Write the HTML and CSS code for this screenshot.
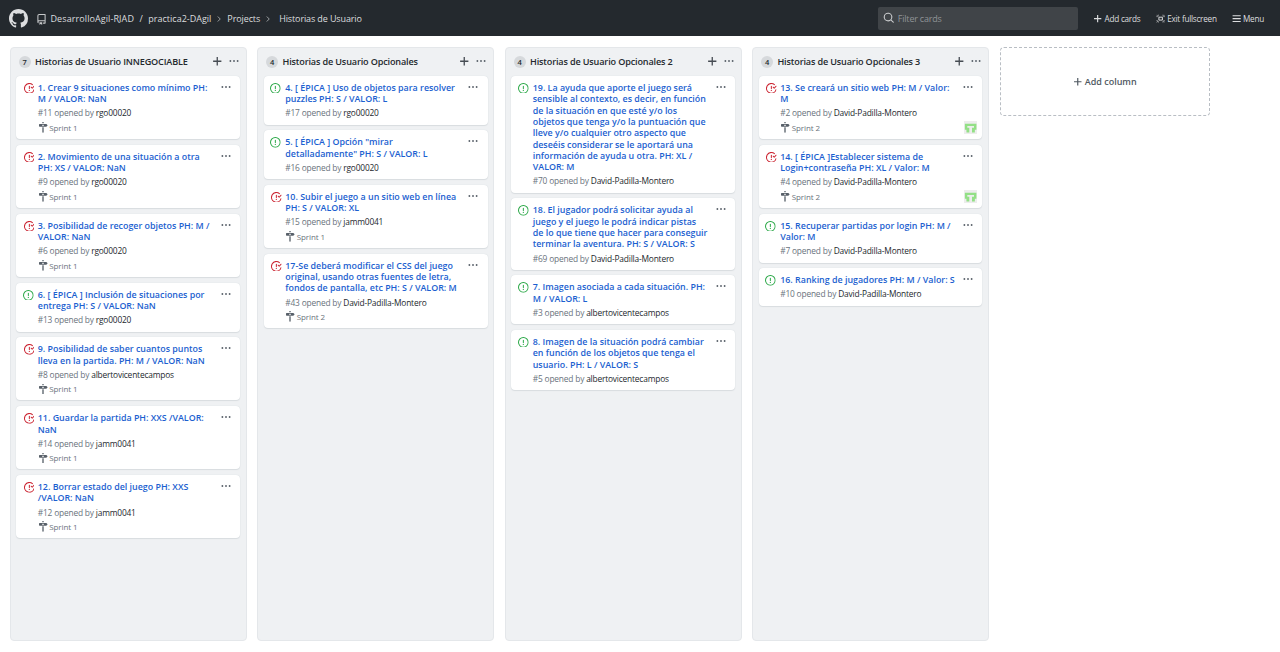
FILE: index.html
```html
<!DOCTYPE html>
<html lang="es">
<head>
<meta charset="utf-8">
<title>Historias de Usuario</title>
<link rel="stylesheet" href="styles.css">
</head>
<body>
<svg class="sprite" width="0" height="0" aria-hidden="true">
  <symbol id="mark" viewBox="0 0 16 16"><path d="M8 0C3.58 0 0 3.58 0 8c0 3.54 2.29 6.53 5.47 7.59.4.07.55-.17.55-.38 0-.19-.01-.82-.01-1.49-2.01.37-2.53-.49-2.69-.94-.09-.23-.48-.94-.82-1.13-.28-.15-.68-.52-.01-.53.63-.01 1.08.58 1.23.82.72 1.21 1.87.87 2.33.66.07-.52.28-.87.51-1.07-1.78-.2-3.64-.89-3.64-3.95 0-.87.31-1.59.82-2.15-.08-.2-.36-1.02.08-2.12 0 0 .67-.21 2.2.82.64-.18 1.32-.27 2-.27s1.36.09 2 .27c1.53-1.04 2.2-.82 2.2-.82.44 1.1.16 1.92.08 2.12.51.56.82 1.27.82 2.15 0 3.07-1.87 3.75-3.65 3.95.29.25.54.73.54 1.48 0 1.07-.01 1.93-.01 2.2 0 .21.15.46.55.38A8.01 8.01 0 0 0 16 8c0-4.42-3.58-8-8-8z"/></symbol>
  <symbol id="repo" viewBox="0 0 16 16"><path d="M2 2.500A2.500 2.500 0 0 1 4.500 0h8.750a.75.75 0 0 1 .75.75v12.500a.75.75 0 0 1-.75.75h-2.500a.75.75 0 1 1 0-1.500h1.750v-2h-8a1 1 0 0 0-.714 1.700.75.75 0 0 1-1.072 1.050A2.495 2.495 0 0 1 2 11.500v-9zm10.500-1V9h-8c-.356 0-.694.074-1 .208V2.500a1 1 0 0 1 1-1h8zM5 12.250v3.250a.25.25 0 0 0 .4.200l1.450-1.087a.25.25 0 0 1 .3 0L8.600 15.700a.25.25 0 0 0 .4-.2v-3.250a.25.25 0 0 0-.25-.25h-3.500a.25.25 0 0 0-.25.250z"/></symbol>
  <symbol id="chevron" viewBox="0 0 16 16"><path d="M5.500 3 10.500 8l-5 5" fill="none" stroke="currentColor" stroke-width="2"/></symbol>
  <symbol id="search" viewBox="0 0 16 16"><path d="M11.500 7a4.500 4.500 0 1 1-9 0 4.500 4.500 0 0 1 9 0zm-.82 4.740a6 6 0 1 1 1.060-1.060l3.040 3.040a.75.75 0 1 1-1.060 1.060l-3.040-3.040z"/></symbol>
  <symbol id="plus" viewBox="0 0 16 16"><path d="M8 1.700v12.600M1.700 8h12.600" fill="none" stroke="currentColor" stroke-width="2"/></symbol>
  <symbol id="dots" viewBox="0 0 16 16"><circle cx="2.200" cy="8" r="1.500"/><circle cx="8" cy="8" r="1.500"/><circle cx="13.800" cy="8" r="1.500"/></symbol>
  <symbol id="full" viewBox="0 0 16 16"><path d="M5 5.500h6v5H5z" fill="none" stroke="currentColor" stroke-width="1.700"/><path d="M1 1.500l2.500 2.500M15 1.500 12.500 4M1 14.500 3.500 12M15 14.500 12.500 12M.5 4.500h3M4 1v3M15.500 4.500h-3M12 1v3M.5 11.500h3M4 15v-3M15.500 11.500h-3M12 15v-3" fill="none" stroke="currentColor" stroke-width=".9"/></symbol>
  <symbol id="bars" viewBox="0 0 16 16"><path d="M1 3h14M1 8h14M1 13h14" fill="none" stroke="currentColor" stroke-width="1.900"/></symbol>
  <symbol id="open" viewBox="0 0 16 16"><path d="M8 1.500a6.500 6.500 0 1 0 0 13 6.500 6.500 0 0 0 0-13zM0 8a8 8 0 1 1 16 0A8 8 0 0 1 0 8zm9 3a1 1 0 1 1-2 0 1 1 0 0 1 2 0zm-.25-6.250a.75.75 0 0 0-1.500 0v3.500a.75.75 0 0 0 1.500 0v-3.500z"/></symbol>
  <symbol id="closed" viewBox="0 0 16 16"><path d="M1.500 8a6.500 6.500 0 0 1 10.650-5.003.75.75 0 0 0 .959-1.153 8 8 0 1 0 2.592 8.330.75.75 0 1 0-1.444-.407A6.500 6.500 0 0 1 1.500 8zM8 12a1 1 0 1 0 0-2 1 1 0 0 0 0 2zm0-8a.75.75 0 0 1 .75.75v3.500a.75.75 0 1 1-1.500 0v-3.500A.75.75 0 0 1 8 4zm4.780 4.280 3-3a.75.75 0 0 0-1.060-1.060l-2.470 2.470-.97-.97a.749.749 0 1 0-1.060 1.060l1.500 1.500a.75.75 0 0 0 1.060 0z"/></symbol>
  <symbol id="sign" viewBox="0 0 14 16"><path d="M8 2H6V0h2v2zm4 5H2c-.55 0-1-.45-1-1V4c0-.55.45-1 1-1h10l2 2-2 2zM8 4H6v2h2V4zM6 16h2V8H6v8z"/></symbol>
  <symbol id="ident" viewBox="0 0 12 12"><path fill="#ededed" d="M0 0h12v12H0z"/><path fill="#93e086" d="M.8 2.500h10.400v5.500H9.800v2.300H7.200V6H9V4.500H3V6h1.800v4.300H2.200V8H.8z"/></symbol>
</svg>
<header class="topbar">
  <svg class="logo"><use href="#mark"/></svg>
  <svg class="icon repo"><use href="#repo"/></svg>
  <nav class="crumbs"><a class="owner">DesarrolloAgil-RJAD</a><span class="slash">/</span><a class="name">practica2-DAgil</a><svg class="chev"><use href="#chevron"/></svg><a class="projects">Projects</a><svg class="chev"><use href="#chevron"/></svg><a class="current">Historias de Usuario</a></nav>
  <div class="filter"><svg><use href="#search"/></svg><span>Filter cards</span></div>
  <a class="action add"><svg><use href="#plus"/></svg><span>Add cards</span></a>
  <a class="action exit"><svg><use href="#full"/></svg><span>Exit fullscreen</span></a>
  <a class="action menu"><svg><use href="#bars"/></svg><span>Menu</span></a>
</header>
<main class="board">
  <section class="column">
    <header class="colhead"><span class="count">7</span><h2>Historias de Usuario INNEGOCIABLE</h2><svg class="plus"><use href="#plus"/></svg><svg class="dots"><use href="#dots"/></svg></header>
    <article class="card"><svg class="state closed"><use href="#closed"/></svg><div class="body"><h3>1. Crear 9 situaciones como mínimo PH:<br>M / VALOR: NaN</h3><p class="by">#11 opened by <b>rgo00020</b></p><p class="sprint"><svg><use href="#sign"/></svg>Sprint 1</p></div><svg class="dots"><use href="#dots"/></svg></article>
    <article class="card"><svg class="state closed"><use href="#closed"/></svg><div class="body"><h3>2. Movimiento de una situación a otra<br>PH: XS / VALOR: NaN</h3><p class="by">#9 opened by <b>rgo00020</b></p><p class="sprint"><svg><use href="#sign"/></svg>Sprint 1</p></div><svg class="dots"><use href="#dots"/></svg></article>
    <article class="card"><svg class="state closed"><use href="#closed"/></svg><div class="body"><h3>3. Posibilidad de recoger objetos PH: M /<br>VALOR: NaN</h3><p class="by">#6 opened by <b>rgo00020</b></p><p class="sprint"><svg><use href="#sign"/></svg>Sprint 1</p></div><svg class="dots"><use href="#dots"/></svg></article>
    <article class="card"><svg class="state"><use href="#open"/></svg><div class="body"><h3>6. [ ÉPICA ] Inclusión de situaciones por<br>entrega PH: S / VALOR: NaN</h3><p class="by">#13 opened by <b>rgo00020</b></p></div><svg class="dots"><use href="#dots"/></svg></article>
    <article class="card"><svg class="state closed"><use href="#closed"/></svg><div class="body"><h3>9. Posibilidad de saber cuantos puntos<br>lleva en la partida. PH: M / VALOR: NaN</h3><p class="by">#8 opened by <b>albertovicentecampos</b></p><p class="sprint"><svg><use href="#sign"/></svg>Sprint 1</p></div><svg class="dots"><use href="#dots"/></svg></article>
    <article class="card"><svg class="state closed"><use href="#closed"/></svg><div class="body"><h3>11. Guardar la partida PH: XXS /VALOR:<br>NaN</h3><p class="by">#14 opened by <b>jamm0041</b></p><p class="sprint"><svg><use href="#sign"/></svg>Sprint 1</p></div><svg class="dots"><use href="#dots"/></svg></article>
    <article class="card"><svg class="state closed"><use href="#closed"/></svg><div class="body"><h3>12. Borrar estado del juego PH: XXS<br>/VALOR: NaN</h3><p class="by">#12 opened by <b>jamm0041</b></p><p class="sprint"><svg><use href="#sign"/></svg>Sprint 1</p></div><svg class="dots"><use href="#dots"/></svg></article>
  </section>
  <section class="column">
    <header class="colhead"><span class="count">4</span><h2>Historias de Usuario Opcionales</h2><svg class="plus"><use href="#plus"/></svg><svg class="dots"><use href="#dots"/></svg></header>
    <article class="card"><svg class="state"><use href="#open"/></svg><div class="body"><h3>4. [ ÉPICA ] Uso de objetos para resolver<br>puzzles PH: S / VALOR: L</h3><p class="by">#17 opened by <b>rgo00020</b></p></div><svg class="dots"><use href="#dots"/></svg></article>
    <article class="card"><svg class="state"><use href="#open"/></svg><div class="body"><h3>5. [ ÉPICA ] Opción "mirar<br>detalladamente" PH: S / VALOR: L</h3><p class="by">#16 opened by <b>rgo00020</b></p></div><svg class="dots"><use href="#dots"/></svg></article>
    <article class="card"><svg class="state closed"><use href="#closed"/></svg><div class="body"><h3>10. Subir el juego a un sitio web en línea<br>PH: S / VALOR: XL</h3><p class="by">#15 opened by <b>jamm0041</b></p><p class="sprint"><svg><use href="#sign"/></svg>Sprint 1</p></div><svg class="dots"><use href="#dots"/></svg></article>
    <article class="card"><svg class="state closed"><use href="#closed"/></svg><div class="body"><h3>17-Se deberá modificar el CSS del juego<br>original, usando otras fuentes de letra,<br>fondos de pantalla, etc PH: S / VALOR: M</h3><p class="by">#43 opened by <b>David-Padilla-Montero</b></p><p class="sprint"><svg><use href="#sign"/></svg>Sprint 2</p></div><svg class="dots"><use href="#dots"/></svg></article>
  </section>
  <section class="column">
    <header class="colhead"><span class="count">4</span><h2>Historias de Usuario Opcionales 2</h2><svg class="plus"><use href="#plus"/></svg><svg class="dots"><use href="#dots"/></svg></header>
    <article class="card"><svg class="state"><use href="#open"/></svg><div class="body"><h3>19. La ayuda que aporte el juego será<br>sensible al contexto, es decir, en función<br>de la situación en que esté y/o los<br>objetos que tenga y/o la puntuación que<br>lleve y/o cualquier otro aspecto que<br>deseéis considerar se le aportará una<br>información de ayuda u otra. PH: XL /<br>VALOR: M</h3><p class="by">#70 opened by <b>David-Padilla-Montero</b></p></div><svg class="dots"><use href="#dots"/></svg></article>
    <article class="card"><svg class="state"><use href="#open"/></svg><div class="body"><h3>18. El jugador podrá solicitar ayuda al<br>juego y el juego le podrá indicar pistas<br>de lo que tiene que hacer para conseguir<br>terminar la aventura. PH: S / VALOR: S</h3><p class="by">#69 opened by <b>David-Padilla-Montero</b></p></div><svg class="dots"><use href="#dots"/></svg></article>
    <article class="card"><svg class="state"><use href="#open"/></svg><div class="body"><h3>7. Imagen asociada a cada situación. PH:<br>M / VALOR: L</h3><p class="by">#3 opened by <b>albertovicentecampos</b></p></div><svg class="dots"><use href="#dots"/></svg></article>
    <article class="card"><svg class="state"><use href="#open"/></svg><div class="body"><h3>8. Imagen de la situación podrá cambiar<br>en función de los objetos que tenga el<br>usuario. PH: L / VALOR: S</h3><p class="by">#5 opened by <b>albertovicentecampos</b></p></div><svg class="dots"><use href="#dots"/></svg></article>
  </section>
  <section class="column">
    <header class="colhead"><span class="count">4</span><h2>Historias de Usuario Opcionales 3</h2><svg class="plus"><use href="#plus"/></svg><svg class="dots"><use href="#dots"/></svg></header>
    <article class="card"><svg class="state closed"><use href="#closed"/></svg><div class="body"><h3>13. Se creará un sitio web PH: M / Valor:<br>M</h3><p class="by">#2 opened by <b>David-Padilla-Montero</b></p><p class="sprint"><svg><use href="#sign"/></svg>Sprint 2</p></div><svg class="dots"><use href="#dots"/></svg><svg class="avatar"><use href="#ident"/></svg></article>
    <article class="card"><svg class="state closed"><use href="#closed"/></svg><div class="body"><h3>14. [ ÉPICA ]Establecer sistema de<br>Login+contraseña PH: XL / Valor: M</h3><p class="by">#4 opened by <b>David-Padilla-Montero</b></p><p class="sprint"><svg><use href="#sign"/></svg>Sprint 2</p></div><svg class="dots"><use href="#dots"/></svg><svg class="avatar"><use href="#ident"/></svg></article>
    <article class="card"><svg class="state"><use href="#open"/></svg><div class="body"><h3>15. Recuperar partidas por login PH: M /<br>Valor: M</h3><p class="by">#7 opened by <b>David-Padilla-Montero</b></p></div><svg class="dots"><use href="#dots"/></svg></article>
    <article class="card"><svg class="state"><use href="#open"/></svg><div class="body"><h3>16. Ranking de jugadores PH: M / Valor: S</h3><p class="by">#10 opened by <b>David-Padilla-Montero</b></p></div><svg class="dots"><use href="#dots"/></svg></article>
  </section>
  <button class="addcol"><svg><use href="#plus"/></svg><span>Add column</span></button>
</main>
</body>
</html>
```
FILE: styles.css
```css
* { box-sizing: border-box; }
body { margin: 0; height: 652px; overflow: hidden; background: #fff; color: #24292e; font-family: "Open Sans", "Noto Sans", sans-serif; font-size: 8.6px; display: flex; flex-direction: column; }
svg { fill: currentColor; fill-rule: evenodd; flex: none; display: block; }
.sprite { position: absolute; }
h2, h3, p { margin: 0; white-space: nowrap; }
.topbar { height: 36px; flex: none; background: #24292e; color: #dcdddf; display: flex; align-items: center; padding: 0 16px 0 8.500px; white-space: nowrap; }
.logo { width: 19px; height: 19px; margin-right: 8.500px; }
.repo { width: 11px; height: 11px; margin-top: 2px; color: #c6c8ca; }
.crumbs { display: flex; align-items: center; padding: 1px 0 0 3.500px; font-size: 9px; }
.owner { letter-spacing: .09px; }
.slash { margin: 0 5.500px; }
.chev { width: 8px; height: 8px; margin: 1px 4px 0; color: #9a9da0; }
.projects { letter-spacing: -.1px; }
.current { margin-left: 3px; letter-spacing: -.12px; }
.filter { margin-left: auto; width: 200px; height: 23px; border-radius: 2px; background: #404448; color: #8f9396; display: flex; align-items: center; gap: 3px; padding-left: 5.500px; font-size: 9px; letter-spacing: -.2px; }
.filter svg { width: 11.500px; height: 11.500px; color: #c9cbcd; }
.action { display: flex; align-items: center; gap: 2px; font-size: 8.200px; letter-spacing: -.25px; padding-top: 1px; }
.action svg { width: 9.300px; height: 9.300px; }
.add { margin-left: 15.500px; }
.exit { margin-left: 15.500px; }
.menu { margin-left: 15px; }
.board { display: flex; align-items: flex-start; gap: 10.670px; padding: 11px 0 0 10px; }
.column { width: 236.830px; height: 593.500px; flex: none; background: #eff1f3; border: 1px solid #e4e7ea; border-radius: 4px; padding: 0 5.800px 0 5.400px; display: flex; flex-direction: column; gap: 5.700px; }
.colhead { height: 22.300px; padding: 5px 1.500px 0 2.300px; display: flex; align-items: center; }
.count { width: 12px; height: 12px; border-radius: 6px; background: #d6d9dc; font-size: 7.500px; font-weight: 600; line-height: 12px; text-align: center; }
h2 { flex: 1; margin-left: 4.300px; font-size: 9.100px; font-weight: 600; line-height: 14px; letter-spacing: -.15px; }
.colhead .plus { width: 10.500px; height: 10.500px; margin: 0 6.300px 1px 0; color: #464c53; }
.colhead .dots { margin-bottom: 1px; }
.dots { width: 10px; height: 10px; color: #586069; }
.card { position: relative; display: flex; background: #fff; border-radius: 4px; box-shadow: 0 0 1px #ccd2d8, 0 1px 1px #dadde1; padding: 6px 9.300px 4.300px 6.500px; }
.state { width: 10.700px; height: 10.700px; margin-top: .8px; color: #28a745; }
.closed { color: #cb2431; margin-left: .7px; margin-right: -.7px; }
.body { flex: 1; padding-left: 4.200px; min-width: 0; }
.card > .dots { margin-top: -.3px; }
h3 { font-size: 8.900px; font-weight: 600; line-height: 11.330px; color: #1c5fd0; }
.by { margin-top: 1.800px; line-height: 14px; font-size: 8.400px; letter-spacing: -.19px; color: #6a737d; }
.by b { font-weight: 400; color: #24292e; }
.sprint { height: 14.500px; display: flex; align-items: center; font-size: 8px; letter-spacing: -.1px; color: #6a737d; gap: 1.500px; }
.sprint svg { width: 10px; height: 10.700px; color: #586069; }
.avatar { position: absolute; right: 5.300px; bottom: 5px; width: 13.300px; height: 13.300px; }
.addcol { width: 210px; height: 69px; flex: none; border: 1px dashed #b9bec4; border-radius: 4px; background: #fff; display: flex; align-items: center; justify-content: center; gap: 2px; padding: 0; color: #505962; font: 600 9px "Open Sans", sans-serif; }
.addcol svg { width: 9.500px; height: 9.500px; }
```
